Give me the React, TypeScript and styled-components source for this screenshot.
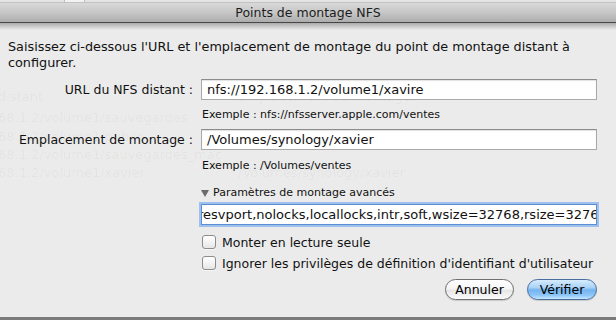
import React from 'react'
import styled, { createGlobalStyle } from 'styled-components'

const GlobalStyle = createGlobalStyle`
  html, body {
    margin: 0;
    padding: 0;
    background: #ebebeb;
  }
  * {
    box-sizing: border-box;
  }
`

const FONT = `"DejaVu Sans", "Noto Sans", sans-serif`

const Sheet = () => {
  return (
    <>
      <GlobalStyle />
      <Window>
        <TopStrip>
          <StripTab />
        </TopStrip>
        <TitleBar>Points de montage NFS</TitleBar>
        <Body>
          {/* the window behind, showing faintly through the sheet */}
          <Ghosts aria-hidden>
            <Ghost style={{ left: -2, top: 66 }}>distant</Ghost>
            <Ghost style={{ left: 238, top: 66 }}>Emplacement de montage</Ghost>
            <Ghost style={{ left: -2, top: 87 }}>68.1.2/volume1/sauvegardes</Ghost>
            <Ghost style={{ left: -2, top: 106 }}>68.1.2/volume1/public</Ghost>
            <Ghost style={{ left: -2, top: 124 }}>68.1.2/volume1/sauvegardes_mac</Ghost>
            <Ghost style={{ left: -2, top: 142 }}>68.1.2/volume1/xavier</Ghost>
            <Ghost style={{ left: 238, top: 142 }}>/Volumes/synology/xavier</Ghost>
          </Ghosts>

          <Intro>
            Saisissez ci-dessous l'URL et l'emplacement de montage du point de montage distant à
            configurer.
          </Intro>

          <Form>
            <Label $mt={8}>URL du NFS distant :</Label>
            <TextField $mt={8}>nfs://192.168.1.2/volume1/xavire</TextField>
            <Hint $mt={8}>Exemple : nfs://nfsserver.apple.com/ventes</Hint>

            <Label $mt={8}>Emplacement de montage :</Label>
            <TextField $mt={8}>/Volumes/synology/xavier</TextField>
            <Hint $mt={9}>Exemple : /Volumes/ventes</Hint>

            <Disclosure $mt={14}>
              <svg width="8" height="8" viewBox="0 0 8 8">
                <polygon points="0,1 8,1 4,8" fill="#6a6a6a" />
              </svg>
              Paramètres de montage avancés
            </Disclosure>
            <FocusedField $mt={4}>
              <Scrolled>resvport,nolocks,locallocks,intr,soft,wsize=32768,rsize=32768</Scrolled>
            </FocusedField>

            <CheckRow $mt={9}>
              <Box />
              Monter en lecture seule
            </CheckRow>
            <CheckRow $mt={5}>
              <Box />
              Ignorer les privilèges de définition d'identifiant d'utilisateur
            </CheckRow>

            <ButtonBar $mt={8}>
              <PushButton type="button">Annuler</PushButton>
              <PushButton type="button" $primary>Vérifier</PushButton>
            </ButtonBar>
          </Form>
        </Body>
      </Window>
    </>
  )
}

const Window = styled.div`
  width: 616px;
  height: 320px;
  display: flex;
  flex-direction: column;
  overflow: hidden;
  font-family: ${FONT};
  color: #111;
`

const TopStrip = styled.div`
  height: 2px;
  background: #e4e4e4;
  display: flex;
`

const StripTab = styled.div`
  margin-left: 64px;
  width: 21px;
  height: 2px;
  background: #f2f2f2;
  border-left: 1px solid #bdbdbd;
  border-right: 1px solid #bdbdbd;
`

const TitleBar = styled.div`
  height: 21px;
  display: flex;
  align-items: center;
  justify-content: center;
  font-size: 12.5px;
  color: #1c1c1c;
  background: linear-gradient(to bottom, #d9d9d9 0%, #c6c6c6 50%, #adadad 100%);
  border-top: 1px solid #c2c2c2;
  border-bottom: 1px solid #484848;
`

const Body = styled.div`
  flex: 1;
  position: relative;
  background: #ebebeb;
  border-bottom: 3px solid #7b7b7b;
  padding-top: 16px;
  &::before {
    content: '';
    position: absolute;
    left: 0;
    right: 0;
    top: 0;
    height: 7px;
    background: linear-gradient(to bottom, rgba(0, 0, 0, 0.28), rgba(0, 0, 0, 0));
  }
`

const Ghosts = styled.div`
  position: absolute;
  inset: 0;
  pointer-events: none;
`

const Ghost = styled.span`
  position: absolute;
  white-space: nowrap;
  font-size: 13px;
  color: rgba(0, 0, 0, 0.045);
`

const Intro = styled.p`
  position: relative;
  margin: 0;
  padding: 0 8px;
  font-size: 12.8px;
  line-height: 16px;
`

const Form = styled.div`
  position: relative;
  display: grid;
  grid-template-columns: 193px 396px;
  column-gap: 8px;
  align-items: center;
`

const Label = styled.div<{ $mt: number }>`
  grid-column: 1;
  margin-top: ${(p) => p.$mt}px;
  text-align: right;
  font-size: 12.5px;
  white-space: nowrap;
`

const TextField = styled.div<{ $mt: number }>`
  grid-column: 2;
  margin-top: ${(p) => p.$mt}px;
  height: 21px;
  display: flex;
  align-items: center;
  padding-left: 5px;
  font-size: 13px;
  white-space: nowrap;
  background: #fff;
  border: 1px solid #a9a9a9;
  border-top-color: #8c8c8c;
  box-shadow: inset 0 1px 1px rgba(0, 0, 0, 0.12);
`

const Hint = styled.div<{ $mt: number }>`
  grid-column: 2;
  margin-top: ${(p) => p.$mt}px;
  padding-left: 1px;
  font-size: 11px;
  line-height: 13px;
`

const Disclosure = styled.div<{ $mt: number }>`
  grid-column: 2;
  margin-top: ${(p) => p.$mt}px;
  display: flex;
  align-items: center;
  gap: 4px;
  font-size: 11px;
  line-height: 14px;
  svg {
    flex: none;
  }
`

const FocusedField = styled.div<{ $mt: number }>`
  grid-column: 2;
  margin-top: ${(p) => p.$mt}px;
  height: 21px;
  display: flex;
  align-items: center;
  overflow: hidden;
  background: #fff;
  border: 1px solid #5d8dd2;
  box-shadow: 0 0 0 2px #9dc1ec;
  font-size: 13px;
  white-space: nowrap;
`

const Scrolled = styled.span`
  margin-left: -4px;
`

const CheckRow = styled.label<{ $mt: number }>`
  grid-column: 2;
  margin-top: ${(p) => p.$mt}px;
  display: flex;
  align-items: center;
  gap: 6px;
  padding-left: 1px;
  height: 16px;
  font-size: 12.5px;
  white-space: nowrap;
`

const Box = styled.span`
  flex: none;
  width: 14px;
  height: 14px;
  border: 1px solid #8c8c8c;
  border-radius: 3px;
  background: linear-gradient(to bottom, #ffffff 0%, #f3f3f3 50%, #e6e6e6 100%);
  box-shadow: 0 1px 0 rgba(255, 255, 255, 0.6);
`

const ButtonBar = styled.div<{ $mt: number }>`
  grid-column: 2;
  margin-top: ${(p) => p.$mt}px;
  display: flex;
  justify-content: flex-end;
  gap: 13px;
`

const PushButton = styled.button<{ $primary?: boolean }>`
  width: ${(p) => (p.$primary ? 70 : 69)}px;
  height: 21px;
  padding: 0;
  border-radius: 11px;
  font-family: ${FONT};
  font-size: 12.5px;
  color: #000;
  border: 1px solid ${(p) => (p.$primary ? '#4a6c9e' : '#707070')};
  background: ${(p) =>
    p.$primary
      ? 'linear-gradient(to bottom, #d6ecfd 0%, #a9d2f6 40%, #74b3ee 52%, #8cc6fa 80%, #c7e8ff 100%)'
      : 'linear-gradient(to bottom, #ffffff 0%, #f6f6f6 45%, #e6e6e6 55%, #fbfbfb 100%)'};
  box-shadow: 0 1px 1px rgba(0, 0, 0, 0.15);
  cursor: pointer;
`

export default Sheet
